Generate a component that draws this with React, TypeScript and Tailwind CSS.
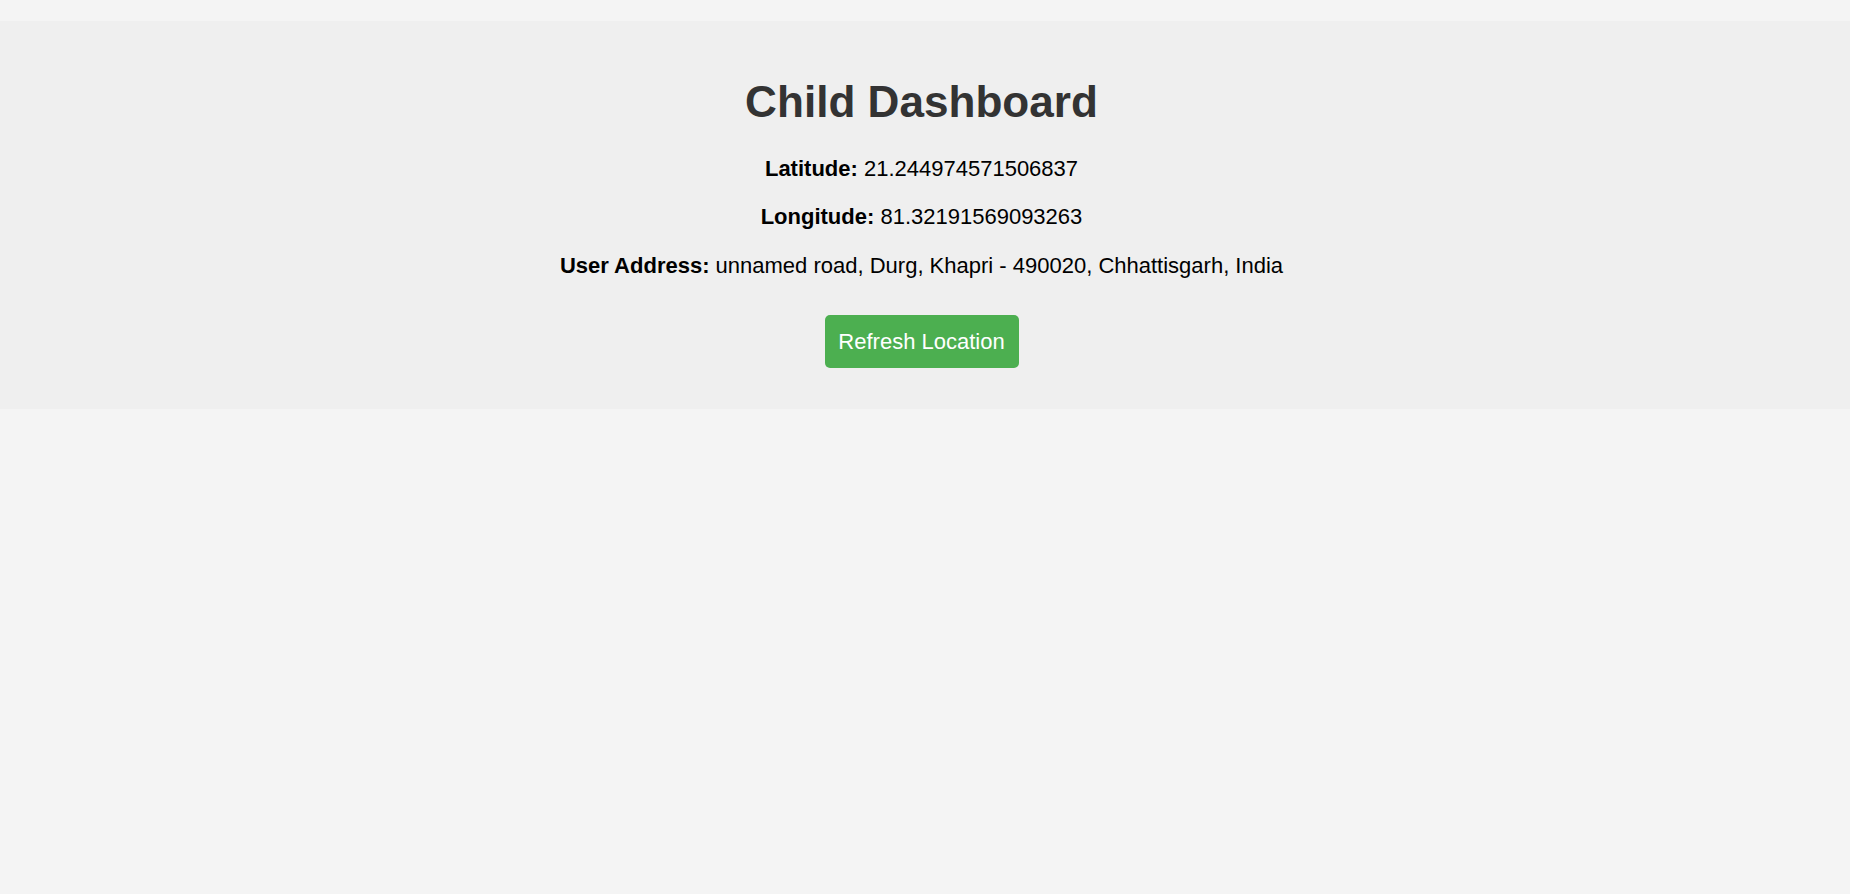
export default function App() {
  return (
    <div className="min-h-[894px] bg-[#f4f4f4] pt-[21px]" style={{ fontFamily: '"Liberation Sans", Arial, sans-serif' }}>
      <div className="bg-[#efefef] pt-[56px] pb-[41px] pr-[7px] text-center">
        <h1 className="text-[44.1px] leading-[50px] font-bold text-[#333333]">Child Dashboard</h1>
        <p className="mt-[29px] text-[22px] leading-[26px] text-black">
          <strong>Latitude:</strong> 21.244974571506837
        </p>
        <p className="mt-[22.3px] text-[22px] leading-[26px] text-black">
          <strong>Longitude:</strong> 81.32191569093263
        </p>
        <p className="mt-[22.5px] text-[22px] leading-[26px] text-black">
          <strong>User Address:</strong> unnamed road, Durg, Khapri - 490020, Chhattisgarh, India
        </p>
        <div className="mt-[36.5px] flex justify-center">
          <button className="h-[53px] w-[194px] rounded-[5px] bg-[#4caf50] text-[22px] leading-[26px] text-white">
            Refresh Location
          </button>
        </div>
      </div>
    </div>
  );
}
